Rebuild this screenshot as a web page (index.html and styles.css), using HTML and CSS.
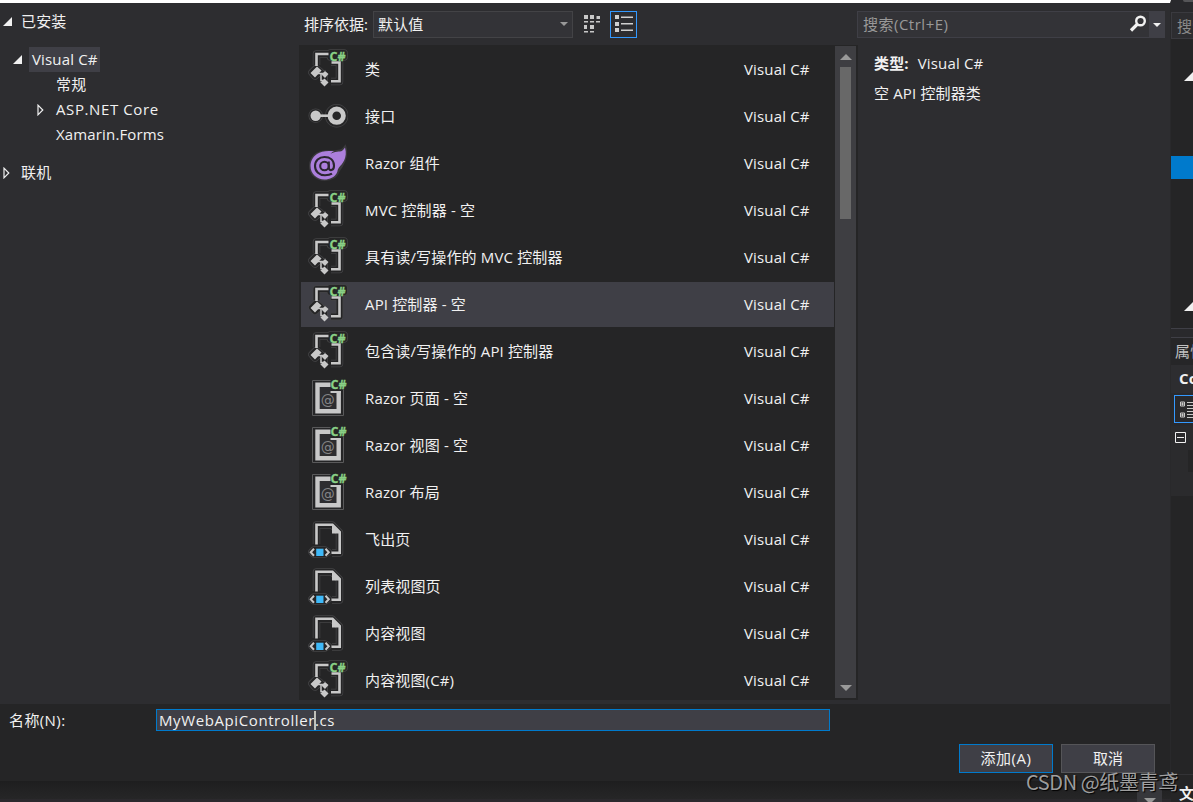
FILE: index.html
```
<!DOCTYPE html>
<html lang="zh-CN">
<head>
    <meta charset="UTF-8">
    <meta name="viewport" content="width=device-width, initial-scale=1.0">
    <title>添加新项</title>
    <link rel="stylesheet" href="styles.css">
</head>
<body>
    <!-- icon shapes shared by the template list -->
    <svg class="defs" width="0" height="0">
        <symbol id="icon-class" viewBox="0 0 40 45">
            <g class="halo">
                <path d="M8.500 18V7H20M23 15H31.500V34.500H23M4 25.500L8 21.500L12 24.500L7 29ZM12 27H18M16 27V36M22.500 6H36V10H22.500Z"/>
            </g>
            <g class="halo-in">
                <path d="M8.500 18V7H20M23 15H31.500V34.500H23M4 25.500L8 21.500L12 24.500L7 29ZM12 27H18M16 27V36M22.500 6H36V10H22.500Z"/>
            </g>
            <path class="line" d="M8.500 19V7H20.500M23.500 15.500H31.500V34.300H23"/>
            <path class="solid" d="M2.500 26L9 19.500L13.500 23.500L7 30.500ZM13.500 27.500L17 24L20.500 27L17 31ZM12.500 35.500L16.500 31.500L20.500 35.500L16.500 39.500Z"/>
            <path class="thin" d="M9 26.500H17M13 26.500V33.500H17"/>
            <text class="cs" x="21.500" y="13.700">C#</text>
        </symbol>
        <symbol id="icon-interface" viewBox="0 0 40 45">
            <g class="halo"><circle cx="7.700" cy="21.700" r="3.500"/><circle cx="28.700" cy="21.700" r="8"/></g>
            <g class="halo-in"><circle cx="7.700" cy="21.700" r="3.500"/><circle cx="28.700" cy="21.700" r="8"/></g>
            <circle class="solid" cx="7.700" cy="21.700" r="5.200"/>
            <path class="line" d="M10 21.700H22"/>
            <circle class="ring" cx="28.700" cy="21.700" r="6.700"/>
        </symbol>
        <symbol id="icon-blazor" viewBox="0 0 40 45">
            <path class="flame-edge" d="M37 6.500C33 12 29 10 23 11C19 10.500 13 10.500 9 13C4.500 16 2.500 20.500 2.500 25C2.500 33 9 38.500 16.500 38.500C23 38.500 28.500 35.500 30 30C33 26 40 17 37 6.500Z"/>
            <path class="flame" d="M37 6.500C33.500 12.500 31 9.500 25.500 11.500C24 12 23 12.500 22 13.500C23.500 11.500 25 10.800 26 10.300C18 9.500 13 10.500 9 13C4.500 16 2.500 20.500 2.500 25C2.500 33 9 38.500 16.500 38.500C22 38.500 26.500 36 28.500 32.500C30 30.500 29 29 31 26.500C34 23 40 17 37 6.500Z"/>
            <circle class="swirl" cx="16.500" cy="25" r="4.300"/>
            <path class="swirl" d="M20.800 20.500V26.500C20.800 30.500 26 30 26 24.700C26 19 22 16 16.500 16C11 16 7 19.500 7 25C7 30.500 11.500 34.300 17 34.300C20 34.300 22.500 33.700 24 32.700"/>
        </symbol>
        <symbol id="icon-razor" viewBox="0 0 40 45">
            <path class="frame-edge" d="M4.500 4.500H35.500V39.500H4.500Z"/>
            <path class="frame" d="M9.500 8.700H30.700V35.300H9.500Z"/>
            <path class="mask" d="M22.500 3H39V13.500H35V15H22.500Z"/>
            <path class="mark" d="M22.500 16H32.900"/>
            <text class="at" x="12.700" y="28.800">@</text>
            <text class="cs" x="22.500" y="13.300">C#</text>
        </symbol>
        <symbol id="icon-page" viewBox="0 0 40 45">
            <g class="halo"><path d="M8.500 27V8H24L31.500 15.500V36H24M4 35L6 33H17L20 35L17 37H6Z"/></g>
            <g class="halo-in"><path d="M8.500 27V8H24L31.500 15.500V36H24M4 35L6 33H17L20 35L17 37H6Z"/></g>
            <path class="line" d="M8.500 27.500V7.800H24.500L31.700 15V35.800H23.500"/>
            <path class="solid" d="M24 7V16.500H33Z"/>
            <path class="chevron" d="M6 31.700L2.700 35.200L6 38.700M17.500 31.700L20.800 35.200L17.500 38.700"/>
            <path class="blue" d="M8.200 31.700H15.500V39H8.200Z"/>
        </symbol>
        <symbol id="open" viewBox="0 0 9 9"><path d="M9 0V9H0Z" fill="#f1f1f1"/></symbol>
        <symbol id="closed" viewBox="0 0 7 12"><path d="M1 1.200L5.800 6L1 10.800Z" fill="none" stroke="#f1f1f1" stroke-width="1.200"/></symbol>
    </svg>

    <div class="window">
        <div class="dialog">
            <div class="content">
                <nav class="tree">
                    <div class="node root"><svg class="open"><use href="#open"/></svg><span>已安装</span></div>
                    <div class="node lang"><svg class="open"><use href="#open"/></svg><span class="current">Visual C#</span></div>
                    <div class="node leaf"><span>常规</span></div>
                    <div class="node leaf parent"><svg class="closed"><use href="#closed"/></svg><span>ASP.NET Core</span></div>
                    <div class="node leaf"><span>Xamarin.Forms</span></div>
                    <div class="node online"><svg class="closed"><use href="#closed"/></svg><span>联机</span></div>
                </nav>

                <section class="templates">
                    <div class="toolbar">
                        <label>排序依据:</label>
                        <div class="select"><span>默认值</span><i class="caret"></i></div>
                        <svg class="view-icon" width="18" height="20" viewBox="0 0 18 20">
                            <path fill="#c8c8c8" d="M1 1H5V5H1ZM7 1H11V5H7ZM13.500 2H17V5H13.500ZM1 7H5V8.500H1ZM7 7H11V8.500H7ZM13 7H17V8.500H13ZM1 11H4V15H1ZM7 11H11V15H7ZM1 17H5V18.500H1ZM7 17H11V18.500H7Z"/>
                        </svg>
                        <div class="view-on">
                            <svg width="20" height="18" viewBox="0 0 20 18">
                                <path fill="#d0d0d0" d="M1 0H5V4H1ZM7 1.500H19V3H7ZM1 7H5V11H1ZM7 8H19V9.500H7ZM1 13H5V17H1ZM7 14.500H19V16H7Z"/>
                            </svg>
                        </div>
                    </div>
                    <div class="list">
                        <ul>
                            <li><svg><use href="#icon-class"/></svg><span class="name">类</span><span>Visual C#</span></li>
                            <li><svg><use href="#icon-interface"/></svg><span class="name">接口</span><span>Visual C#</span></li>
                            <li><svg><use href="#icon-blazor"/></svg><span class="name">Razor 组件</span><span>Visual C#</span></li>
                            <li><svg><use href="#icon-class"/></svg><span class="name">MVC 控制器 - 空</span><span>Visual C#</span></li>
                            <li><svg><use href="#icon-class"/></svg><span class="name">具有读/写操作的 MVC 控制器</span><span>Visual C#</span></li>
                            <li class="selected"><svg><use href="#icon-class"/></svg><span class="name">API 控制器 - 空</span><span>Visual C#</span></li>
                            <li><svg><use href="#icon-class"/></svg><span class="name">包含读/写操作的 API 控制器</span><span>Visual C#</span></li>
                            <li><svg><use href="#icon-razor"/></svg><span class="name">Razor 页面 - 空</span><span>Visual C#</span></li>
                            <li><svg><use href="#icon-razor"/></svg><span class="name">Razor 视图 - 空</span><span>Visual C#</span></li>
                            <li><svg><use href="#icon-razor"/></svg><span class="name">Razor 布局</span><span>Visual C#</span></li>
                            <li><svg><use href="#icon-page"/></svg><span class="name">飞出页</span><span>Visual C#</span></li>
                            <li><svg><use href="#icon-page"/></svg><span class="name">列表视图页</span><span>Visual C#</span></li>
                            <li><svg><use href="#icon-page"/></svg><span class="name">内容视图</span><span>Visual C#</span></li>
                            <li><svg><use href="#icon-class"/></svg><span class="name">内容视图(C#)</span><span>Visual C#</span></li>
                        </ul>
                        <div class="scrollbar">
                            <i class="arrow-up"></i>
                            <div class="thumb"></div>
                            <i class="arrow-down"></i>
                        </div>
                    </div>
                </section>

                <aside class="details">
                    <div class="search">
                        <span>搜索(Ctrl+E)</span>
                        <svg width="18" height="18" viewBox="0 0 18 18">
                            <circle cx="11.500" cy="6" r="4.300" fill="none" stroke="#f1f1f1" stroke-width="2.400"/>
                            <path d="M8.500 9L2 15.500" stroke="#f1f1f1" stroke-width="3.200"/>
                        </svg>
                        <div class="search-drop"><i class="caret"></i></div>
                    </div>
                    <p class="type"><b>类型:</b><span>Visual C#</span></p>
                    <p>空 API 控制器类</p>
                </aside>
            </div>

            <div class="footer">
                <div class="name-row">
                    <label>名称(N):</label>
                    <div class="input"><span>MyWebApiController</span><i class="cursor"></i><span>.cs</span></div>
                </div>
                <div class="buttons">
                    <button class="add">添加(A)</button>
                    <button>取消</button>
                </div>
            </div>
        </div>

        <div class="ide">
            <div class="ide-head"><i class="dot"></i></div>
            <div class="ide-search">搜索</div>
            <div class="solution">
                <svg class="open"><use href="#open"/></svg>
                <div class="solution-on"></div>
                <svg class="open"><use href="#open"/></svg>
            </div>
            <div class="splitter"></div>
            <div class="prop-title">属性</div>
            <div class="prop-object">Co</div>
            <div class="prop-tools">
                <div class="prop-button">
                    <svg width="24" height="18" viewBox="0 0 24 18">
                        <path d="M.5 1H4.500V5H.5ZM.5 12H4.500V16H.5Z" fill="none" stroke="#c8c8c8"/>
                        <path d="M1 3H4M2.500 1.500V4.500M1 14H4M2.500 12.500V15.500M7 1.500H24M7 4.500H24M7 7.500H24M7 10.500H24M7 13.500H24M7 16.500H24" stroke="#c8c8c8"/>
                    </svg>
                </div>
            </div>
            <div class="prop-grid">
                <svg width="11" height="11" viewBox="0 0 11 11"><path d="M.5 .5H10.500V10.500H.5ZM2 5.500H9" fill="none" stroke="#f1f1f1"/></svg>
                <div class="prop-cell"></div>
            </div>
            <div class="prop-help"></div>
            <div class="prop-text">文</div>
        </div>
    </div>
    <div class="bottom">
        <div class="corner"><i class="arrow-down"></i></div>
    </div>
    <div class="watermark">CSDN @纸墨青鸢</div>
</body>
</html>
```
FILE: styles.css
```
* {
    margin: 0;
    padding: 0;
    box-sizing: border-box;
}

body {
    width: 1193px;
    height: 802px;
    position: relative;
    overflow: hidden;
    background: #222223;
    color: #f1f1f1;
    font: 15px/25px "Open Sans", "Noto Sans CJK SC", sans-serif;
    letter-spacing: 0.15px;
    white-space: nowrap;
}

.defs {
    position: absolute;
}

.window {
    display: flex;
    height: 802px;
}

.dialog {
    width: 1171px;
    height: 781px;
    border-top: 3px solid #fff;
    border-right: 1px solid #29292b;
    background: #2d2d30;
}

.content {
    display: flex;
    height: 701px;
}

/* category tree */
.tree {
    width: 299px;
    padding-top: 6px;
}

.node {
    display: flex;
    align-items: center;
    height: 25px;
}

.open {
    width: 9px;
    height: 9px;
}

.closed {
    width: 7px;
    height: 12px;
}

.root {
    padding-left: 3px;
    gap: 9px;
    margin-bottom: 13px;
}

.lang {
    padding-left: 13px;
    gap: 7px;
}

.current {
    background: #3f3f46;
    padding: 0 2px 0 3px;
}

.leaf {
    padding-left: 56px;
}

.parent {
    padding-left: 37px;
    gap: 12px;
    letter-spacing: 0.6px;
}

.online {
    margin-top: 13px;
    padding-left: 3px;
    gap: 11px;
}

/* template list */
.templates {
    width: 559px;
}

.toolbar {
    display: flex;
    align-items: center;
    height: 42px;
    padding-left: 5px;
}

.toolbar label {
    width: 69px;
    letter-spacing: 0;
}

.select {
    display: flex;
    align-items: center;
    justify-content: space-between;
    width: 200px;
    height: 27px;
    padding: 0 4px;
    background: #333337;
    border: 1px solid #434346;
}

.caret {
    border: 4px solid transparent;
    border-top-color: #999;
    border-bottom: 0;
}

.view-icon {
    margin: 0 9px 0 10px;
}

.view-on {
    display: flex;
    align-items: center;
    justify-content: center;
    width: 27px;
    height: 27px;
    border: 1px solid #3399ff;
}

.list {
    display: flex;
    height: 655px;
    padding: 1px 2px 2px;
    background: #252526;
}

.list ul {
    width: 533px;
    padding-top: 1px;
    list-style: none;
    overflow: hidden;
}

.list li {
    display: flex;
    align-items: center;
    height: 45px;
    margin-bottom: 2px;
    padding-left: 7px;
}

.list li svg {
    width: 40px;
    height: 45px;
}

.list .name {
    width: 396px;
    padding-left: 17px;
}

.list .selected {
    background: #3f3f46;
}

.scrollbar {
    display: flex;
    flex-direction: column;
    align-items: center;
    width: 21px;
    margin-left: 1px;
    padding: 8px 0 7px;
    background: #3e3e42;
}

.arrow-up {
    border: 6px solid transparent;
    border-top: 0;
    border-bottom-color: #999;
}

.arrow-down {
    border: 6px solid transparent;
    border-bottom: 0;
    border-top-color: #999;
}

.thumb {
    width: 11px;
    height: 152px;
    margin: 7px 0 auto;
    background: #686868;
}

/* icons */
.halo,
.halo-in {
    fill: #252526;
    stroke: #444446;
    stroke-width: 7.5px;
    stroke-linejoin: round;
}

.halo path,
.halo-in path {
    fill: none;
}

.halo-in {
    stroke: #252526;
    stroke-width: 6px;
}

.line {
    fill: none;
    stroke: #c8c8c8;
    stroke-width: 2.6px;
}

.thin {
    fill: none;
    stroke: #c8c8c8;
    stroke-width: 1.5px;
}

.solid {
    fill: #c8c8c8;
}

.ring {
    fill: none;
    stroke: #c8c8c8;
    stroke-width: 4.8px;
}

.cs {
    fill: #89d185;
    stroke: #89d185;
    stroke-width: 0.3px;
    font: bold 12.5px "Open Sans", sans-serif;
    letter-spacing: 0;
}

.flame {
    fill: #ac7fdc;
}

.flame-edge {
    fill: #252526;
    stroke: #3a393c;
    stroke-width: 3px;
}

.swirl {
    fill: none;
    stroke: #2b2630;
    stroke-width: 2.1px;
}

.frame-edge {
    fill: #252526;
    stroke: #5a5a5b;
}

.frame {
    fill: #2d2d30;
    stroke: #c8c8c8;
    stroke-width: 4.4px;
}

.mask {
    fill: #252526;
}

.mark {
    stroke: #c8c8c8;
    stroke-width: 2px;
}

.at {
    fill: #858587;
    font: 14px "DejaVu Sans", sans-serif;
}

.chevron {
    fill: none;
    stroke: #c8c8c8;
    stroke-width: 2px;
}

.blue {
    fill: #3fb9f8;
}

/* details */
.details {
    width: 312px;
    padding-top: 8px;
}

.details p {
    margin-bottom: 5px;
    padding-left: 16px;
}

.details .type {
    display: flex;
    gap: 9px;
    margin-top: 13px;
}

.search {
    display: flex;
    align-items: center;
    width: 308px;
    height: 27px;
    margin-left: -1px;
    padding-left: 5px;
    background: #333337;
    border: 1px solid #3f3f46;
    color: #999;
    letter-spacing: 0.5px;
}

.search svg {
    margin: 0 2px 2px auto;
}

.search-drop {
    display: flex;
    align-items: center;
    justify-content: center;
    width: 15px;
    height: 25px;
    background: #3f3f46;
}

.search-drop .caret {
    border-top-color: #f1f1f1;
}

/* name field and buttons */
.footer {
    height: 77px;
    padding-top: 5px;
    background: #252526;
}

.name-row {
    display: flex;
    height: 22px;
    line-height: 22px;
}

.name-row label {
    width: 156px;
    padding-left: 9px;
    letter-spacing: 0.4px;
}

.input {
    display: flex;
    align-items: center;
    width: 674px;
    padding-left: 2px;
    background: #3f3f46;
    border: 1px solid #007acc;
    letter-spacing: 0.6px;
}

.cursor {
    width: 2px;
    height: 19px;
    margin: 0 -1px;
    background: #c0c0b9;
}

.buttons {
    display: flex;
    justify-content: flex-end;
    gap: 8px;
    margin-top: 13px;
    padding-right: 15px;
}

.buttons button {
    width: 94px;
    height: 29px;
    background: #3f3f46;
    border: 1px solid #555558;
    color: #f1f1f1;
    font: inherit;
}

.buttons .add {
    border-color: #007acc;
    letter-spacing: 0.5px;
}

/* docked panels behind the dialog */
.ide {
    width: 22px;
    overflow: hidden;
    background: #252526;
}

.ide-head {
    height: 12px;
    padding-left: 12px;
    background: #29292c;
}

.dot {
    display: block;
    width: 12px;
    height: 2px;
    border-radius: 0 0 6px 6px;
    background: #555558;
}

.ide-search {
    height: 27px;
    padding-left: 5px;
    line-height: 27px;
    background: #2d2d30;
    border: 1px solid #3a3a3f;
    border-right: 0;
    color: #8a8a8a;
}

.solution {
    height: 289px;
    padding-top: 33px;
}

.solution .open {
    display: block;
    margin-left: 13px;
}

.solution-on {
    height: 23px;
    margin: 75px 0 123px;
    background: #007acc;
}

.splitter {
    height: 10px;
    background: #29292c;
    border: 1px solid #3f3f46;
    border-width: 1px 0;
}

.prop-title {
    height: 27px;
    padding-left: 4px;
    line-height: 27px;
    background: #262628;
    color: #c0c0c0;
}

.prop-object {
    height: 28px;
    padding-left: 8px;
    line-height: 26px;
    background: #2d2d30;
    font-weight: bold;
}

.prop-tools {
    height: 33px;
    padding: 2px 0 0 3px;
    background: #29292c;
}

.prop-button {
    width: 28px;
    height: 28px;
    padding: 5px;
    border: 1px solid #3399ff;
}

.prop-grid {
    height: 70px;
    padding: 6px 0 0 4px;
    background: #2b2b2d;
}

.prop-grid svg {
    display: block;
}

.prop-cell {
    height: 22px;
    margin: 7px 0 0 13px;
    background: #252526;
}

.prop-help {
    height: 279px;
    border-bottom: 1px solid #333336;
}

.prop-text {
    padding: 6px 0 0 8px;
    font-weight: bold;
}

.bottom {
    position: absolute;
    left: 0;
    top: 781px;
    width: 1171px;
    height: 21px;
    padding-left: 1137px;
    border-bottom: 3px solid #2b292d;
    background: linear-gradient(#1e1e1f, #262627);
}

.corner {
    display: flex;
    justify-content: center;
    width: 25px;
    height: 21px;
    padding-top: 17px;
    background: #37373b;
}

.watermark {
    position: absolute;
    left: 1026px;
    top: 768px;
    color: rgba(205, 205, 205, 0.75);
    font: 20px/28px "Noto Sans CJK SC", sans-serif;
    letter-spacing: -0.4px;
    text-shadow: 1px 1px 1px #000;
}
```
